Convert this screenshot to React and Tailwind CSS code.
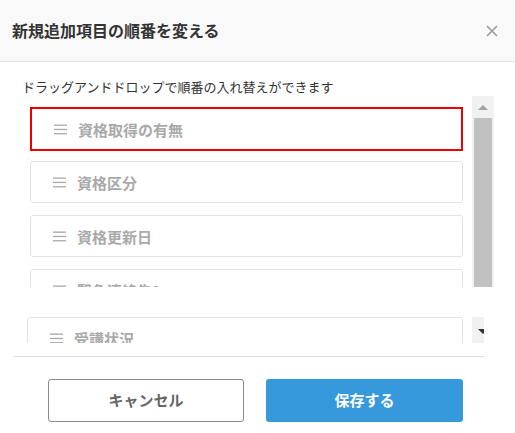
import React from "react";

const font = { fontFamily: '"Noto Sans CJK JP", "Noto Sans", sans-serif' };

function Grip() {
  return (
    <svg width="13" height="11" viewBox="0 0 13 11" className="shrink-0">
      <rect x="0" y="0.5" width="13" height="1.3" fill="#a8a8a8" />
      <rect x="0" y="4.8" width="13" height="1.3" fill="#a8a8a8" />
      <rect x="0" y="9.1" width="13" height="1.3" fill="#a8a8a8" />
    </svg>
  );
}

function Item({ label, selected, className = "" }) {
  return (
    <div
      className={
        "shrink-0 flex items-center gap-[11px] bg-white pl-[22px] " +
        (selected
          ? "h-[44px] border-2 border-[#ee0000] "
          : "h-[42px] border border-[#e2e2e2] rounded-[3px] ") +
        className
      }
    >
      <Grip />
      <span className="text-[15px] font-bold text-[#a9a9a9] leading-none">{label}</span>
    </div>
  );
}

export default function App() {
  return (
    <div className="w-[515px] h-[433px] bg-white overflow-hidden" style={font}>
      <div className="h-[62px] bg-[#f9f9f9] border-b border-[#e3e3e3] flex items-center justify-between pl-[12px] pr-[17px]">
        <span className="text-[16px] font-bold text-[#333] pb-[2px]">新規追加項目の順番を変える</span>
        <svg width="12" height="12" viewBox="0 0 12 12">
          <path d="M1 1 L11 11 M11 1 L1 11" stroke="#9a9a9a" strokeWidth="1.6" />
        </svg>
      </div>
      <div className="pt-[16px] pl-[22px] h-[34px] text-[13px] leading-[18px] text-[#333]">
        ドラッグアンドドロップで順番の入れ替えができます
      </div>
      <div className="mt-[0px] flex h-[191px] overflow-hidden">
        <div className="ml-[30px] w-[433px] pt-[11px] flex flex-col">
          <Item label="資格取得の有無" selected className="mb-[10px]" />
          <Item label="資格区分" className="mb-[12px]" />
          <Item label="資格更新日" className="mb-[12px]" />
          <Item label="緊急連絡先2" />
        </div>
        <div className="ml-[9px] w-[22px] bg-[#f1f1f1] flex flex-col items-center">
          <div className="h-[22px] flex items-center justify-center">
            <div className="w-0 h-0 border-l-[5px] border-r-[5px] border-b-[5px] border-l-transparent border-r-transparent border-b-[#a3a3a3]" />
          </div>
          <div className="w-[18px] flex-1 bg-[#c1c1c1]" />
        </div>
      </div>
      <div className="mt-[30px] flex h-[26px] overflow-hidden">
        <div className="ml-[27px] w-[436px] flex flex-col">
          <Item label="受講状況" />
        </div>
        <div className="ml-[9px] w-[12px] bg-[#f1f1f1] relative overflow-hidden">
          <div className="absolute left-[6px] top-[12px] w-0 h-0 border-l-[5px] border-r-[5px] border-t-[5px] border-l-transparent border-r-transparent border-t-[#333]" />
        </div>
      </div>
      <div className="mt-[13px] ml-[13px] w-[471px] h-px bg-[#dedede]" />
      <div className="mt-[22px] flex pl-[48px] gap-[22px]">
        <button className="w-[196px] h-[43px] rounded-[3px] border border-[#8a8a8a] bg-white text-[15px] font-bold text-[#666]">
          キャンセル
        </button>
        <button className="w-[197px] h-[43px] rounded-[3px] bg-[#3699db] text-[15px] font-bold text-white">
          保存する
        </button>
      </div>
    </div>
  );
}
